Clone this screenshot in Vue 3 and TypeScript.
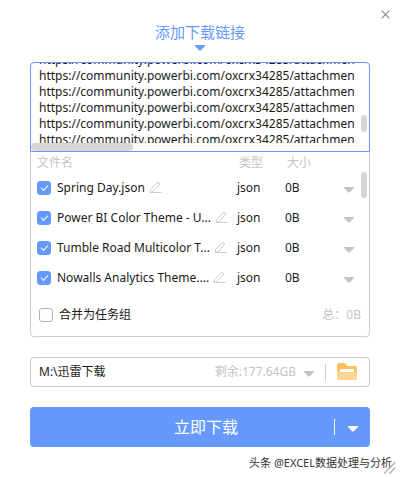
<script setup lang="ts">
import { onMounted, ref } from 'vue'

interface FileItem {
  name: string
  type: string
  size: string
  checked: boolean
}

const linkText = ref(Array(12).fill('https://community.powerbi.com/oxcrx34285/attachmen').join('\n'))
const linkBox = ref<HTMLTextAreaElement | null>(null)
const files = ref<FileItem[]>([
  { name: 'Spring Day.json', type: 'json', size: '0B', checked: true },
  { name: 'Power BI Color Theme - U...', type: 'json', size: '0B', checked: true },
  { name: 'Tumble Road Multicolor T...', type: 'json', size: '0B', checked: true },
  { name: 'Nowalls Analytics Theme....', type: 'json', size: '0B', checked: true }
])
const merge = ref(false)
const folder = ref('M:\\迅雷下载')

onMounted(() => {
  if (linkBox.value) linkBox.value.scrollTop = 91
})
</script>

<template>
  <main class="dialog">
    <button class="close" type="button" aria-label="关闭">
      <svg width="9" height="9" viewBox="0 0 9 9"><path d="M.7.7l7.6 7.6M8.3.7L.7 8.3" fill="none" stroke="#8c8c8c" stroke-width="1.2" /></svg>
    </button>

    <h1 class="title">添加下载链接</h1>
    <svg class="title-arrow" width="10" height="6" viewBox="0 0 10 6"><path d="M0 0h10v1L5.600 5.600h-1.200L0 1z" fill="#69f" /></svg>

    <div class="links">
      <textarea ref="linkBox" v-model="linkText" class="link-input" wrap="off" spellcheck="false" aria-label="下载链接"></textarea>
      <span class="thumb link-thumb-y"></span>
      <span class="thumb link-thumb-x"></span>
    </div>

    <section class="files">
      <table class="file-table">
        <thead>
          <tr>
            <th class="col-name">文件名</th>
            <th class="col-type">类型</th>
            <th class="col-size">大小</th>
            <th class="col-more"></th>
          </tr>
        </thead>
        <tbody>
          <tr v-for="file in files" :key="file.name">
            <td>
              <div class="name-cell">
                <label class="check-label">
                  <input v-model="file.checked" class="check" type="checkbox" />
                  <span>{{ file.name }}</span>
                </label>
                <button class="icon-button" type="button" aria-label="重命名">
                  <svg width="13" height="12" viewBox="0 0 13 12"><path d="M1 10.500L1.500 7.500 8 1q1-.8 2 0t.2 2L4 9.500 1 10.500h11.500" fill="none" stroke="#ccc" stroke-linejoin="round" /></svg>
                </button>
              </div>
            </td>
            <td>{{ file.type }}</td>
            <td>{{ file.size }}</td>
            <td>
              <button class="icon-button arrow" type="button" aria-label="更多">
                <svg width="10" height="6" viewBox="0 0 10 6"><path d="M0 0h10v1L5.600 5.600h-1.200L0 1z" fill="#c4c4c4" /></svg>
              </button>
            </td>
          </tr>
        </tbody>
      </table>
      <span class="thumb file-thumb"></span>
      <div class="summary">
        <label class="check-label">
          <input v-model="merge" class="check" type="checkbox" />
          <span>合并为任务组</span>
        </label>
        <span class="muted">总：0B</span>
      </div>
    </section>

    <div class="folder">
      <input v-model="folder" class="folder-input" type="text" aria-label="保存位置" />
      <span class="muted">剩余:177.64GB</span>
      <button class="icon-button arrow" type="button" aria-label="选择位置">
        <svg width="10" height="6" viewBox="0 0 10 6"><path d="M0 0h10v1L5.600 5.600h-1.200L0 1z" fill="#c4c4c4" /></svg>
      </button>
      <span class="divider"></span>
      <button class="icon-button" type="button" aria-label="打开文件夹">
        <svg width="20" height="18" viewBox="0 0 20 18">
          <path d="M0 14V2Q0 0 2 0h5q1.200 0 2 1l1.200 2H18q2 0 2 2v9z" fill="#ffc057" />
          <path d="M3 10V7q0-1 1-1h12q1 0 1 1v3z" fill="#fff" />
          <path d="M0 10q0-1 1-1h18q1 0 1 1v5q0 2-2 2H2q-2 0-2-2z" fill="#ffd591" />
        </svg>
      </button>
    </div>

    <div class="download">
      <button class="download-main" type="button">立即下载</button>
      <span class="download-divider"></span>
      <button class="download-more arrow" type="button" aria-label="更多下载方式">
        <svg width="10" height="6" viewBox="0 0 10 6"><path d="M0 0h10v1L5.600 5.600h-1.200L0 1z" fill="#fff" /></svg>
      </button>
    </div>

    <footer class="credit">头条 @EXCEL数据处理与分析</footer>
    <svg class="grip" width="12" height="12" viewBox="0 0 12 12"><path d="M0 11.500L11.500 0M5.500 11.500l6-6" fill="none" stroke="#aaa" stroke-width="1.200" /></svg>
  </main>
</template>

<style>
body {
  background: #fff;
}
</style>

<style scoped>
.dialog {
  position: relative;
  box-sizing: border-box;
  padding: 22px 30px 6px;
  display: flex;
  flex-direction: column;
  background: #fff;
  color: #1a1a1a;
  font-family: "Noto Sans", "Noto Sans CJK SC", sans-serif;
  font-size: 12px;
  line-height: 16px;
}

button {
  display: flex;
  align-items: center;
  justify-content: center;
  padding: 0;
  border: 0;
  background: none;
  font: inherit;
  cursor: pointer;
}

svg {
  display: block;
}

.arrow {
  padding-top: 4px;
}

.close {
  position: absolute;
  top: 10px;
  right: 10px;
}

.title {
  margin: 0;
  color: #69f;
  font-size: 15px;
  font-weight: 400;
  line-height: 20px;
  text-align: center;
}

.title-arrow {
  align-self: center;
  margin: 3px 0 11px;
}

.links {
  position: relative;
  z-index: 1;
  padding-bottom: 8px;
  border: 1px solid #69f;
  border-radius: 4px 4px 0 0;
}

.link-input {
  display: block;
  box-sizing: border-box;
  width: 100%;
  height: 80px;
  margin: 0;
  padding: 0 8px;
  border: 0;
  outline: 0;
  resize: none;
  background: none;
  color: inherit;
  font: inherit;
  scrollbar-width: none;
}

.thumb {
  position: absolute;
  border-radius: 4px;
  background: #d6d6d6;
}

.link-thumb-y {
  top: 52px;
  right: 2px;
  width: 6px;
  height: 17px;
}

.link-thumb-x {
  bottom: 0;
  left: 0;
  width: 102px;
  height: 8px;
}

.files {
  position: relative;
  border: 1px solid #ccc;
  border-top: 0;
  border-radius: 0 0 4px 4px;
}

.file-table {
  width: 100%;
  table-layout: fixed;
  border-collapse: collapse;
}

th,
td {
  height: 30px;
  padding: 0;
  text-align: left;
  white-space: nowrap;
}

th {
  height: 21px;
  padding-left: 2px;
  color: #c4c4c4;
  font-weight: 400;
}

.col-name {
  padding-left: 6px;
}

.col-type {
  width: 46px;
}

.col-size {
  width: 57px;
}

.col-more {
  width: 23px;
}

td:first-child {
  padding-left: 6px;
}

.name-cell,
.check-label {
  display: flex;
  align-items: center;
}

.name-cell {
  gap: 4px;
}

.check-label {
  gap: 6px;
}

.check {
  appearance: none;
  box-sizing: border-box;
  display: grid;
  place-items: center;
  width: 14px;
  height: 14px;
  margin: 0;
  border: 1px solid #b4b4b4;
  border-radius: 3px;
}

.check:checked {
  border-color: #69f;
  background: #69f;
}

.check:checked::before {
  content: "";
  box-sizing: border-box;
  width: 7px;
  height: 4px;
  margin-bottom: 3px;
  border: solid #fff;
  border-width: 0 0 1px 1px;
  transform: rotate(-45deg);
}

.file-thumb {
  top: 20px;
  right: 2px;
  width: 6px;
  height: 26px;
}

.summary {
  display: flex;
  align-items: center;
  justify-content: space-between;
  height: 43px;
  padding: 0 8px;
}

.muted {
  color: #c4c4c4;
}

.folder {
  display: flex;
  align-items: center;
  gap: 8px;
  height: 28px;
  margin-top: 20px;
  padding: 0 12px 0 8px;
  border: 1px solid #ccc;
  border-radius: 4px;
}

.folder-input {
  flex: 1;
  min-width: 0;
  padding: 0;
  border: 0;
  outline: 0;
  background: none;
  color: inherit;
  font: inherit;
}

.divider {
  width: 1px;
  height: 17px;
  margin: 0 3px;
  background: #ccc;
}

.download {
  display: flex;
  align-items: center;
  height: 40px;
  margin-top: 20px;
  border-radius: 4px;
  background: #69f;
}

.download-main {
  flex: 1;
  height: 100%;
  padding-left: 48px;
  color: #fff;
  font-size: 16px;
}

.download-divider {
  width: 1px;
  height: 16px;
  background: #fff;
}

.download-more {
  width: 35px;
  height: 100%;
}

.credit {
  margin: 8px -22px 0 0;
  color: #333;
  font-size: 11px;
  text-align: right;
}

.grip {
  position: absolute;
  right: 4px;
  bottom: 3px;
}
</style>
